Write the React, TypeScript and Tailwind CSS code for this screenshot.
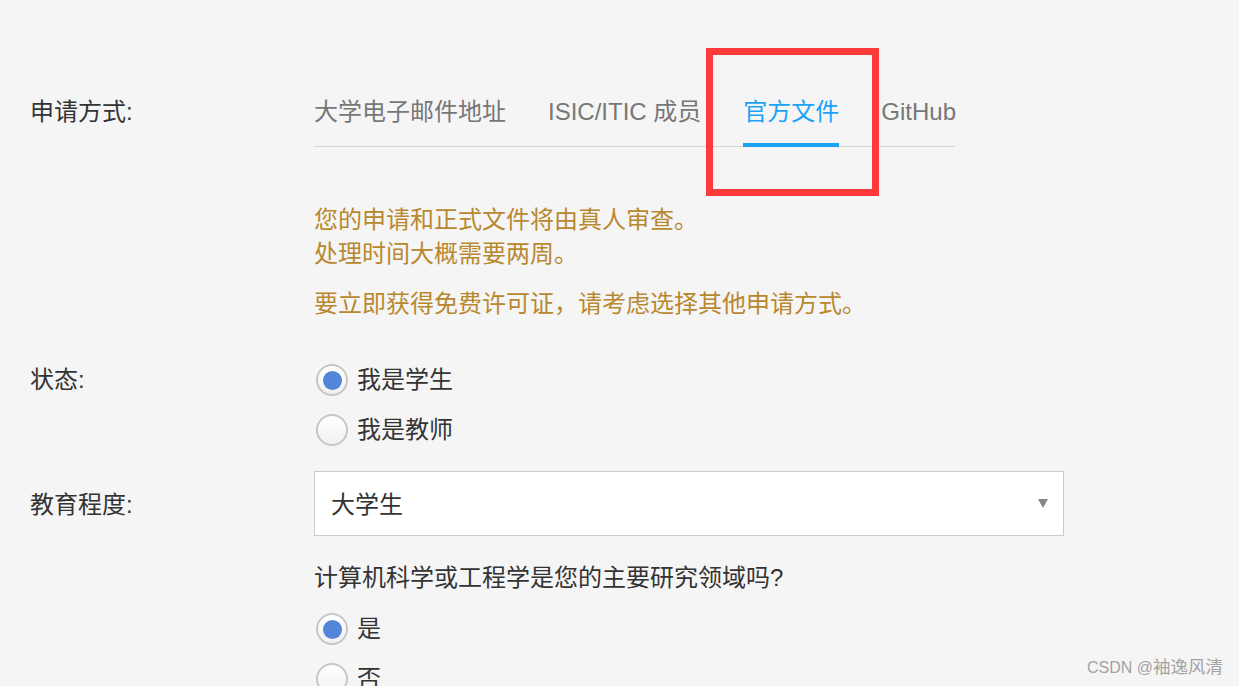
import React from 'react';

const font = { fontFamily: '"Liberation Sans", "Noto Sans CJK SC", sans-serif' };

const tabs = ['大学电子邮件地址', 'ISIC/ITIC 成员', '官方文件', 'GitHub'];

const Radio: React.FC<{ checked?: boolean; label: string }> = ({ checked, label }) => (
	<label className="flex items-center h-[34px] text-[#333]">
		<span className="flex items-center justify-center w-[32px] h-[32px] ml-[2px] rounded-full border-2 border-[#c6c6c6] bg-gradient-to-b from-white to-[#f1f1f1]">
			{checked && <span className="w-[19px] h-[19px] rounded-full bg-[#5284d8]"></span>}
		</span>
		<span className="ml-[9px]">{label}</span>
	</label>
);

const App: React.FC = () => {
	const active = 2;

	return (
		<div
			className="relative h-[686px] overflow-hidden bg-[#f5f5f5] text-[24px] leading-[34px] text-[#333]"
			style={font}
		>
			<div className="flex flex-col pl-[30px] pt-[95px]">
				{/* apply method */}
				<div className="flex">
					<div className="w-[284px] shrink-0">申请方式:</div>
					<div className="flex flex-col w-[641px] shrink-0">
						<ul className="flex gap-[42px] border-b border-[#d6d6d6] whitespace-nowrap">
							{tabs.map((t, i) => (
								<li
									key={t}
									className={
										i === active
											? 'shrink-0 pb-[14px] -mb-px border-b-4 border-[#1aa3f7] text-[#1aa3f7]'
											: 'shrink-0 pb-[14px] -mb-px border-b-4 border-transparent text-[#777]'
									}
								>
									{t}
								</li>
							))}
						</ul>
						<div className="mt-[56px] text-[#b8882f] whitespace-nowrap">
							<p>您的申请和正式文件将由真人审查。</p>
							<p>处理时间大概需要两周。</p>
							<p className="mt-[16px]">要立即获得免费许可证，请考虑选择其他申请方式。</p>
						</div>
					</div>
				</div>

				{/* status */}
				<div className="flex mt-[42px]">
					<div className="w-[284px] shrink-0">状态:</div>
					<div className="flex flex-col gap-[16px]">
						<Radio checked label="我是学生" />
						<Radio label="我是教师" />
					</div>
				</div>

				{/* education */}
				<div className="flex items-center mt-[24px]">
					<div className="w-[284px] shrink-0 pt-[3px]">教育程度:</div>
					<div className="flex items-center justify-between w-[750px] h-[65px] pl-[16px] pr-[15px] bg-white border border-[#cccccc]">
						<span className="pt-[2px]">大学生</span>
						<svg width="10" height="9" viewBox="0 0 10 9">
							<polygon points="0,0 10,0 5,9" fill="#888" />
						</svg>
					</div>
				</div>

				<div className="flex mt-[25px]">
					<div className="w-[284px] shrink-0"></div>
					<div className="flex flex-col">
						<p>计算机科学或工程学是您的主要研究领域吗?</p>
						<div className="flex flex-col gap-[16px] mt-[17px]">
							<Radio checked label="是" />
							<Radio label="否" />
						</div>
					</div>
				</div>
			</div>

			{/* annotation box */}
			<div className="absolute left-[706px] top-[48px] w-[173px] h-[148px] border-[7px] border-[#fc3a3a]"></div>

			{/* watermark */}
			<div className="absolute right-[16px] bottom-[8px] text-[16px] leading-[20px] text-[#a3a3a3]">
				CSDN @<span className="text-[17.5px]">袖逸风清</span>
			</div>
		</div>
	);
};

export default App;
